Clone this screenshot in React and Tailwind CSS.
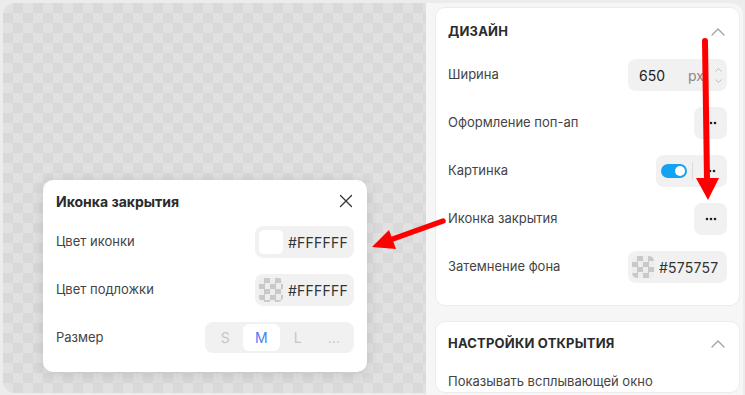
import React from "react";

const checker =
  "[background-image:repeating-conic-gradient(#d9d9d9_0_25%,#e1e1e1_0_50%)] [background-size:20px_20px]";
const smallChecker =
  "[background-image:repeating-conic-gradient(#c9c9c9_0_25%,#ededed_0_50%)] [background-size:11px_11px]";

const ChevronUp = () => (
  <svg width="14" height="8" viewBox="0 0 14 8" className="mr-[2px]">
    <path d="M1 7 L7 1 L13 7" fill="none" stroke="#a3a3a3" strokeWidth="1.4" strokeLinecap="round" strokeLinejoin="round" />
  </svg>
);

const Dots = () => (
  <svg width="12" height="4" viewBox="0 0 12 4">
    <circle cx="2" cy="2" r="1.3" fill="#222" />
    <circle cx="6" cy="2" r="1.3" fill="#222" />
    <circle cx="10" cy="2" r="1.3" fill="#222" />
  </svg>
);

const DotsButton = () => (
  <div className="w-[33px] h-[32px] rounded-[8px] bg-[#f1f1f1] flex items-center justify-center">
    <Dots />
  </div>
);

const Row = ({ label, children }) => (
  <div className="h-[32px] flex items-center justify-between">
    <span className="text-[13px] text-[#444]">{label}</span>
    {children}
  </div>
);

const ColorInput = ({ swatch, value, swatchSize }) => (
  <div className="w-[99px] h-[32px] rounded-[8px] bg-[#f1f1f1] flex items-center pl-[4px] gap-[5px]">
    <div className={`${swatchSize} rounded-[5px] ${swatch}`} />
    <span className="text-[14px] text-[#333] tracking-[0.2px]">{value}</span>
  </div>
);

export default function App() {
  return (
    <div className="relative w-[745px] h-[395px] overflow-hidden bg-[#ececec] font-['Inter',sans-serif] flex pt-[3px] pl-[3px]">
      {/* canvas */}
      <div className={`relative w-[423px] h-[390px] rounded-l-[12px] ${checker}`}>
        {/* close icon popup */}
        <div className="absolute left-[40px] top-[177px] w-[324px] bg-white rounded-[10px] shadow-[0_2px_14px_rgba(0,0,0,0.13)] px-[13px] pb-[19px]">
          <div className="h-[42px] flex items-center justify-between">
            <span className="text-[14px] font-bold text-[#2b2b2b]">Иконка закрытия</span>
            <svg width="14" height="14" viewBox="0 0 14 14" className="mr-[1px]">
              <path d="M1.5 1.5 L12.5 12.5 M12.5 1.5 L1.5 12.5" stroke="#333" strokeWidth="1.3" strokeLinecap="round" />
            </svg>
          </div>
          <div className="mt-[4px] flex flex-col gap-[16px]">
            <Row label="Цвет иконки">
              <ColorInput swatch="bg-white" swatchSize="w-[24px] h-[24px]" value="#FFFFFF" />
            </Row>
            <Row label="Цвет подложки">
              <ColorInput swatch={smallChecker} swatchSize="w-[24px] h-[24px]" value="#FFFFFF" />
            </Row>
            <div className="h-[31px] flex items-center justify-between">
              <span className="text-[13px] text-[#444]">Размер</span>
              <div className="w-[149px] h-[31px] rounded-[8px] bg-[#f1f1f1] p-[2px] grid grid-cols-4">
                <div className="flex items-center justify-center text-[14px] text-[#c6c6c6]">S</div>
                <div className="flex items-center justify-center text-[14px] text-[#4a7ef2] bg-white rounded-[6px]">M</div>
                <div className="flex items-center justify-center text-[14px] text-[#c6c6c6]">L</div>
                <div className="flex items-center justify-center text-[14px] text-[#c6c6c6]">...</div>
              </div>
            </div>
          </div>
        </div>
      </div>

      {/* sidebar */}
      <div className="flex-1 mr-[2px] bg-[#f6f6f6] rounded-tr-[12px] pl-[9px] pr-[3px] pt-[4px] flex flex-col gap-[15px] overflow-hidden">
        <div className="rounded-[10px] bg-white border border-[#ececec] px-[12px] pb-[22px]">
          <div className="h-[47px] flex items-center justify-between">
            <span className="text-[13px] font-bold text-[#2b2b2b] tracking-[0.2px]">ДИЗАЙН</span>
            <ChevronUp />
          </div>
          <div className="mt-[4px] flex flex-col gap-[16px]">
            <Row label="Ширина">
              <div className="w-[99px] h-[32px] rounded-[8px] bg-[#f1f1f1] flex items-center pl-[11px] pr-[5px]">
                <span className="text-[14px] text-[#222]">650</span>
                <span className="ml-[23px] text-[14px] text-[#888]">px</span>
                <div className="ml-auto flex flex-col gap-[7px]">
                  <svg width="7" height="4" viewBox="0 0 7 4">
                    <path d="M0.5 3.5 L3.5 0.5 L6.5 3.5" fill="none" stroke="#bdbdbd" strokeWidth="1" />
                  </svg>
                  <svg width="7" height="4" viewBox="0 0 7 4">
                    <path d="M0.5 0.5 L3.5 3.5 L6.5 0.5" fill="none" stroke="#bdbdbd" strokeWidth="1" />
                  </svg>
                </div>
              </div>
            </Row>
            <Row label="Оформление поп-ап">
              <DotsButton />
            </Row>
            <Row label="Картинка">
              <div className="w-[71px] h-[32px] rounded-[8px] bg-[#f1f1f1] flex items-center pl-[5px]">
                <div className="w-[26px] h-[14px] rounded-full bg-[#14a3f0] flex items-center justify-end pr-[2px]">
                  <div className="w-[10px] h-[10px] rounded-full bg-white" />
                </div>
                <div className="ml-[5px] w-px h-[18px] bg-[#dcdcdc]" />
                <div className="flex-1 flex items-center justify-center">
                  <Dots />
                </div>
              </div>
            </Row>
            <Row label="Иконка закрытия">
              <DotsButton />
            </Row>
            <Row label="Затемнение фона">
              <ColorInput swatch={smallChecker} swatchSize="w-[22px] h-[22px]" value="#575757" />
            </Row>
          </div>
        </div>

        <div className="rounded-[10px] bg-white border border-[#ececec] px-[12px] h-[72px] shrink-0">
          <div className="h-[44px] flex items-center justify-between">
            <span className="text-[13px] font-bold text-[#2b2b2b] tracking-[0.2px]">НАСТРОЙКИ ОТКРЫТИЯ</span>
            <ChevronUp />
          </div>
          <div className="mt-[6px] h-[20px] flex items-center text-[13px] text-[#444]">
            Показывать всплывающей окно
          </div>
        </div>
      </div>

      {/* annotation arrows */}
      <svg className="absolute inset-0 pointer-events-none" width="745" height="395" viewBox="0 0 745 395">
        <line x1="443" y1="221" x2="390" y2="240" stroke="#ff0000" strokeWidth="5.5" strokeLinecap="round" />
        <polygon points="372,247 396,249 389,230" fill="#ff0000" />
        <line x1="705" y1="41" x2="707" y2="180" stroke="#ff0000" strokeWidth="6" strokeLinecap="round" />
        <polygon points="696,178 719,178 708,200" fill="#ff0000" />
      </svg>
    </div>
  );
}
